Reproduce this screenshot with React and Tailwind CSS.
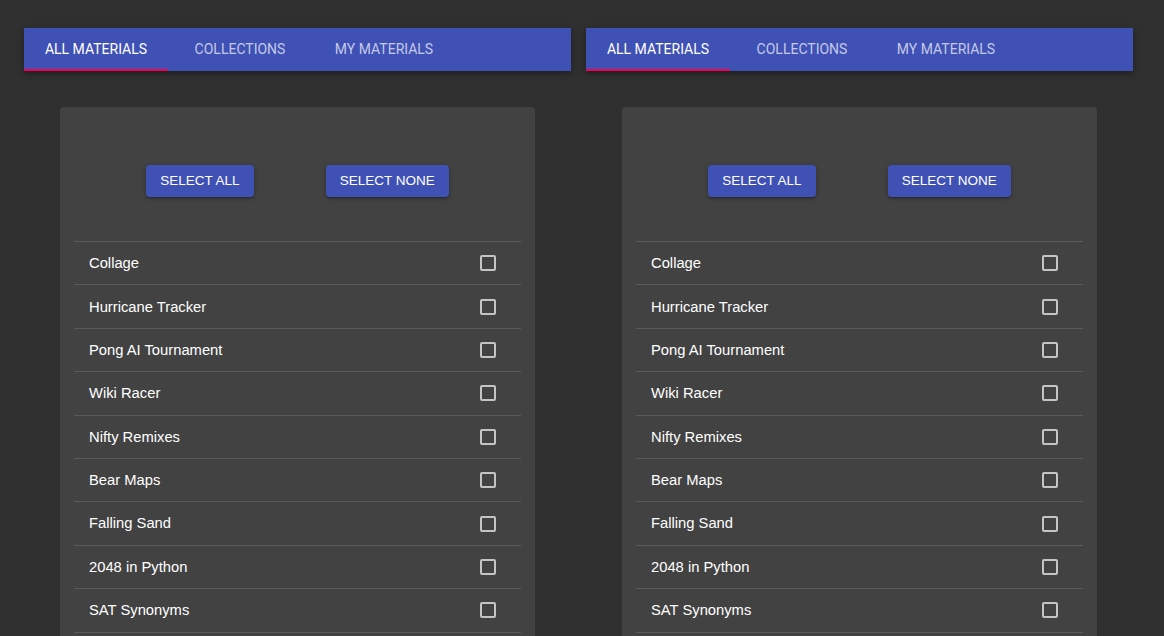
import { useState } from 'react';

const materials = [
  'Collage',
  'Hurricane Tracker',
  'Pong AI Tournament',
  'Wiki Racer',
  'Nifty Remixes',
  'Bear Maps',
  'Falling Sand',
  '2048 in Python',
  'SAT Synonyms',
];

const tabs = ['ALL MATERIALS', 'COLLECTIONS', 'MY MATERIALS'];

const Panel = () => {
  const [active, setActive] = useState(0);
  const [checked, setChecked] = useState({});

  const toggle = (name) => setChecked((c) => ({ ...c, [name]: !c[name] }));
  const setAll = (value) => {
    const next = {};
    materials.forEach((m) => (next[m] = value));
    setChecked(next);
  };

  return (
    <div className="flex-1 min-w-0">
      {/* Tab bar */}
      <div className="flex h-[43px] bg-[#3f51b5] shadow-[0_2px_4px_-1px_rgba(0,0,0,0.2),0_4px_5px_0_rgba(0,0,0,0.14),0_1px_10px_0_rgba(0,0,0,0.12)]">
        {tabs.map((tab, i) => (
          <button
            key={tab}
            onClick={() => setActive(i)}
            className={`relative w-[144px] h-full flex items-center justify-center text-[14px] font-normal font-['Roboto',sans-serif] ${
              active === i ? 'text-white' : 'text-white/70'
            }`}
          >
            {tab}
            {active === i && (
              <span className="absolute left-0 right-0 bottom-0 h-[2px] bg-[#f50057]" />
            )}
          </button>
        ))}
      </div>

      {/* Card */}
      <div className="mx-[36px] mt-[36px] bg-[#424242] rounded px-[14px] pb-[40px]">
        <div className="flex justify-evenly pt-[58px]">
          <button
            onClick={() => setAll(true)}
            className="h-[32px] px-[14px] rounded bg-[#3f51b5] text-white text-[13.5px] shadow-[0_1px_5px_0_rgba(0,0,0,0.2),0_2px_2px_0_rgba(0,0,0,0.14),0_3px_1px_-2px_rgba(0,0,0,0.12)]"
          >
            SELECT ALL
          </button>
          <button
            onClick={() => setAll(false)}
            className="h-[32px] px-[14px] rounded bg-[#3f51b5] text-white text-[13.5px] shadow-[0_1px_5px_0_rgba(0,0,0,0.2),0_2px_2px_0_rgba(0,0,0,0.14),0_3px_1px_-2px_rgba(0,0,0,0.12)]"
          >
            SELECT NONE
          </button>
        </div>

        <ul className="mt-[44px] border-b border-[#5a5a5a]">
          {materials.map((m) => (
            <li
              key={m}
              onClick={() => toggle(m)}
              className="h-[43.4px] border-t border-[#5a5a5a] flex items-center justify-between pl-[15px] pr-[25px] cursor-pointer"
            >
              <span className="text-white text-[14.75px]">{m}</span>
              <span
                className={`w-[16px] h-[16px] rounded-[2px] border-2 ${
                  checked[m] ? 'bg-[#f50057] border-[#f50057]' : 'border-[#c4c4c4]'
                }`}
              />
            </li>
          ))}
        </ul>
      </div>
    </div>
  );
};

const App = () => {
  return (
    <div className="min-h-screen bg-[#303030] pt-[28px] pl-[24px] pr-[31px] flex gap-[15px] font-['Liberation_Sans',Arial,sans-serif]">
      <Panel />
      <Panel />
    </div>
  );
};

export default App;
